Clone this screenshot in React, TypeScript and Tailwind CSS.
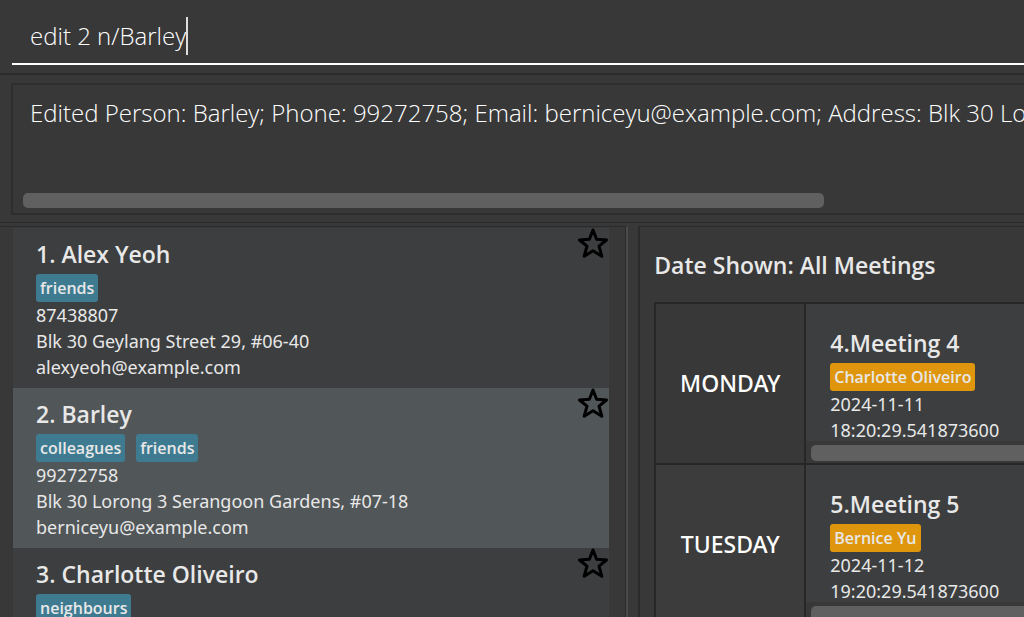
import { useState } from "react";

type Person = {
  name: string;
  tags: string[];
  phone: string;
  address: string;
  email: string;
};

type Meeting = {
  day: string;
  title: string;
  person: string;
  date: string;
  time: string;
};

const people: Person[] = [
  {
    name: "Alex Yeoh",
    tags: ["friends"],
    phone: "87438807",
    address: "Blk 30 Geylang Street 29, #06-40",
    email: "alexyeoh@example.com",
  },
  {
    name: "Barley",
    tags: ["colleagues", "friends"],
    phone: "99272758",
    address: "Blk 30 Lorong 3 Serangoon Gardens, #07-18",
    email: "berniceyu@example.com",
  },
  {
    name: "Charlotte Oliveiro",
    tags: ["neighbours"],
    phone: "",
    address: "",
    email: "",
  },
];

const meetings: Meeting[] = [
  {
    day: "MONDAY",
    title: "4.Meeting 4",
    person: "Charlotte Oliveiro",
    date: "2024-11-11",
    time: "18:20:29.541873600",
  },
  {
    day: "TUESDAY",
    title: "5.Meeting 5",
    person: "Bernice Yu",
    date: "2024-11-12",
    time: "19:20:29.541873600",
  },
];

function StarIcon() {
  return (
    <svg viewBox="0 0 30 30" className="size-[30px]" aria-hidden="true">
      <path
        d="M15 2 18.6 11.2 28.5 12 21 18.2 23.8 28.2 15 22.8 6.2 28.2 9 18.2 1.5 12 11.4 11.2Z"
        fill="none"
        stroke="#000"
        strokeWidth="3"
        strokeLinejoin="round"
      />
    </svg>
  );
}

function CommandBox() {
  const [command, setCommand] = useState("edit 2 n/Barley");
  return (
    <div className="shrink-0 border-b-2 border-[#2b2b2b] pb-2 pl-3">
      <label className="flex h-[65px] items-center border-b-2 border-white pt-2 pl-[18px]">
        <input
          aria-label="Command"
          value={command}
          onChange={(e) => setCommand(e.target.value)}
          className="[field-sizing:content] bg-transparent text-2xl font-light text-white caret-transparent outline-none"
        />
        <span className="h-[38px] w-0.5 bg-[#dddddd]" />
      </label>
    </div>
  );
}

function ResultDisplay() {
  return (
    <section className="shrink-0 pt-2 pb-[7px] pl-[11px]">
      <div className="flex h-[132px] flex-col justify-between border-y-2 border-l-2 border-[#2e2e2e] pt-2 pb-[5px] pl-[10px]">
        <p className="overflow-hidden pl-[7px] text-2xl leading-10 font-light whitespace-nowrap text-white">
          Edited Person: Barley; Phone: 99272758; Email: berniceyu@example.com; Address: Blk 30 Lorong 3
        </p>
        <div className="h-[15px] w-4/5 rounded-[5px] bg-[#606060]" />
      </div>
    </section>
  );
}

function PersonCard({ person, index, selected }: { person: Person; index: number; selected: boolean }) {
  return (
    <li
      className={`flex h-40 shrink-0 items-start justify-between pl-[23px] text-[#e8e8e8] ${
        selected ? "bg-[#515658]" : "bg-[#3c3e3f]"
      }`}
    >
      <div className="pt-2">
        <h2 className="h-[38px] text-[23px] leading-9 font-semibold">
          {index}. {person.name}
        </h2>
        <div className="flex gap-[11px]">
          {person.tags.map((tag) => (
            <span
              key={tag}
              className="rounded-[3px] bg-[#3e7b91] px-1 text-base leading-7 font-semibold"
            >
              {tag}
            </span>
          ))}
        </div>
        <div className="font-['Noto_Sans',sans-serif] text-lg leading-[26px]">
          <p>{person.phone}</p>
          <p>{person.address}</p>
          <p>{person.email}</p>
        </div>
      </div>
      <button type="button" aria-label={`Star ${person.name}`} className="mr-px">
        <StarIcon />
      </button>
    </li>
  );
}

function MeetingRow({ meeting, shaded }: { meeting: Meeting; shaded: boolean }) {
  return (
    <tr className="h-[161px]">
      <th
        scope="row"
        className={`w-[150px] border-2 border-[#272727] p-0 text-center font-['Noto_Sans',sans-serif] text-[23px] font-medium text-white ${
          shaded ? "bg-[#3b3c3b]" : "bg-[#383838]"
        }`}
      >
        {meeting.day}
      </th>
      <td className="border-y-2 border-l-2 border-[#272727] p-0 align-top">
        <div className="h-[137px] overflow-hidden bg-[#3c3e3f] pt-[21px] pl-6 text-[#e8e8e8]">
          <h2 className="h-[38px] text-[23px] leading-9 font-semibold">{meeting.title}</h2>
          <div className="flex">
            <span className="rounded-[3px] bg-[#df960d] px-1 text-base leading-7 font-semibold">
              {meeting.person}
            </span>
          </div>
          <div className="font-['Noto_Sans',sans-serif] text-lg leading-[26px]">
            <p>{meeting.date}</p>
            <p>{meeting.time}</p>
          </div>
        </div>
        <div className="pt-1 pl-[5px]">
          <div className="h-4 rounded-l-[5px] bg-[#606060]" />
        </div>
      </td>
    </tr>
  );
}

export default function App() {
  return (
    <div className="flex h-screen flex-col overflow-hidden bg-[#383838] font-['Open_Sans','Noto_Sans',sans-serif]">
      <CommandBox />
      <ResultDisplay />
      <main className="flex min-h-0 flex-1 border-t border-[#2b2b2b] pt-[3px]">
        <section className="flex min-w-0 flex-[629] border-t border-r-2 border-t-[#2b2b2b] border-r-[#4b4b4b] pl-3">
          <div className="flex min-w-0 flex-1 border-r border-[#2b2b2b] pt-px pr-4 pl-px">
            <ul className="flex min-w-0 flex-1 flex-col">
              {people.map((person, i) => (
                <PersonCard key={person.name} person={person} index={i + 1} selected={i === 1} />
              ))}
            </ul>
          </div>
        </section>
        <section className="flex min-w-0 flex-[395] pl-[10px]">
          <div className="min-w-0 flex-1 border-t border-l-2 border-[#2b2b2b] pl-[14px]">
            <h1 className="h-[75px] pt-5 text-[23px] leading-9 font-semibold text-[#e8e8e8]">
              Date Shown: All Meetings
            </h1>
            <table className="w-full border-collapse">
              <tbody>
                {meetings.map((meeting, i) => (
                  <MeetingRow key={meeting.day} meeting={meeting} shaded={i % 2 === 1} />
                ))}
              </tbody>
            </table>
          </div>
        </section>
      </main>
    </div>
  );
}
